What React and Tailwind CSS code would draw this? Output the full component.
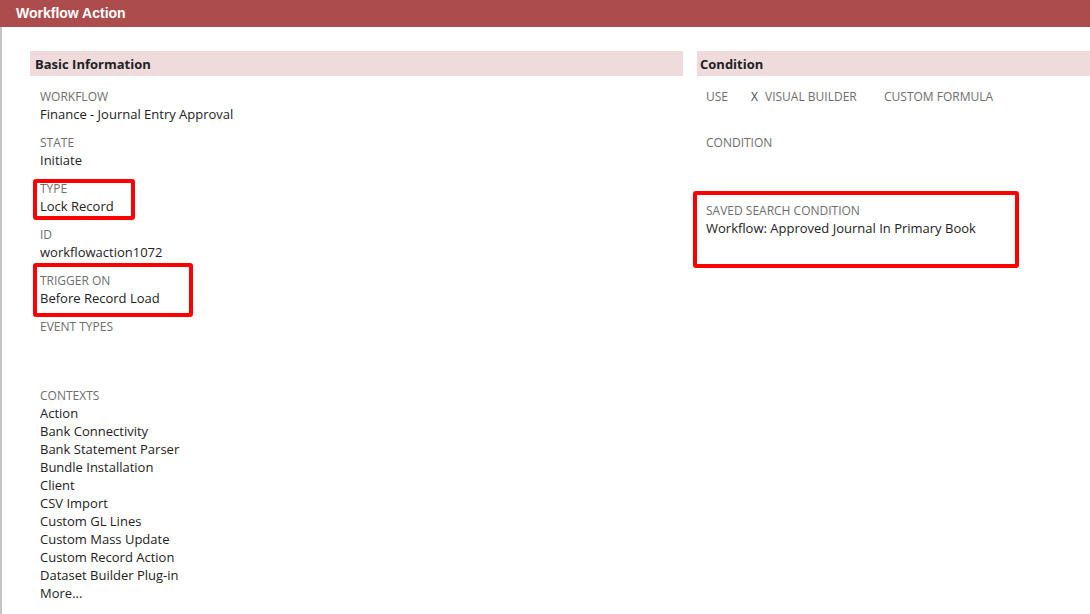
const contexts = [
  'Action',
  'Bank Connectivity',
  'Bank Statement Parser',
  'Bundle Installation',
  'Client',
  'CSV Import',
  'Custom GL Lines',
  'Custom Mass Update',
  'Custom Record Action',
  'Dataset Builder Plug-in',
  'More...',
];

const Field = ({ label, value, className = '' }) => (
  <div className={`mb-[10px] ${className}`}>
    <div className="text-[12px] leading-[17px] pt-px text-[#6e6e6e] uppercase">{label}</div>
    {value && <div className="text-[13px] leading-[18px] text-[#222]">{value}</div>}
  </div>
);

const Highlight = ({ className }) => (
  <div className={`absolute border-[4px] border-[#ff0000] rounded-[3px] pointer-events-none ${className}`} />
);

export default function App() {
  return (
    <div
      className="relative w-[1090px] h-[614px] overflow-hidden bg-white"
      style={{ fontFamily: '"Open Sans", "Liberation Sans", sans-serif' }}
    >
      {/* Title bar */}
      <div className="h-[27px] bg-[#ad4c4d] flex items-center pl-4">
        <span
          className="text-white font-bold text-[14px]"
          style={{ fontFamily: '"Liberation Sans", Arial, sans-serif' }}
        >
          Workflow Action
        </span>
      </div>

      <div className="flex h-[587px] border-l-2 border-[#c4c4c4] pl-[28px] pt-[24px] gap-[14px]">
        {/* Basic Information */}
        <div className="w-[653px] shrink-0">
          <div className="h-[25px] bg-[#efdbdc] flex items-center px-[5px] pt-[2px]">
            <span className="font-bold text-[13px] text-[#222]">Basic Information</span>
          </div>
          <div className="pl-[10px] pt-[11px]">
            <Field label="Workflow" value="Finance - Journal Entry Approval" />
            <Field label="State" value="Initiate" />
            <Field label="Type" value="Lock Record" />
            <Field label="ID" value="workflowaction1072" />
            <Field label="Trigger On" value="Before Record Load" />
            <Field label="Event Types" className="!mb-[51px]" />
            <div className="text-[12px] leading-[17px] pt-px text-[#6e6e6e] uppercase">Contexts</div>
            {contexts.map((c) => (
              <div key={c} className="text-[13px] leading-[18px] text-[#222]">
                {c}
              </div>
            ))}
          </div>
        </div>

        {/* Condition */}
        <div className="w-[653px] shrink-0">
          <div className="h-[25px] bg-[#efdbdc] flex items-center px-[3px] pt-[2px]">
            <span className="font-bold text-[13px] text-[#222]">Condition</span>
          </div>
          <div className="pl-[9px] pt-[12px] text-[12px] leading-[18px] text-[#6e6e6e]">
            <div className="flex items-center mb-[29px] h-[17px]">
              <span className="w-[45px]">USE</span>
              <span className="text-[#444] w-[14px]">X</span>
              <span className="w-[119px]">VISUAL BUILDER</span>
              <span>CUSTOM FORMULA</span>
            </div>
            <div className="mb-[50px]">CONDITION</div>
            <div className="h-[17px]">SAVED SEARCH CONDITION</div>
            <div className="text-[13px] text-[#222]">Workflow: Approved Journal In Primary Book</div>
          </div>
        </div>
      </div>

      <Highlight className="left-[33px] top-[179px] w-[102px] h-[41px]" />
      <Highlight className="left-[33px] top-[263px] w-[160px] h-[54px]" />
      <Highlight className="left-[693px] top-[191px] w-[326px] h-[77px]" />
    </div>
  );
}
